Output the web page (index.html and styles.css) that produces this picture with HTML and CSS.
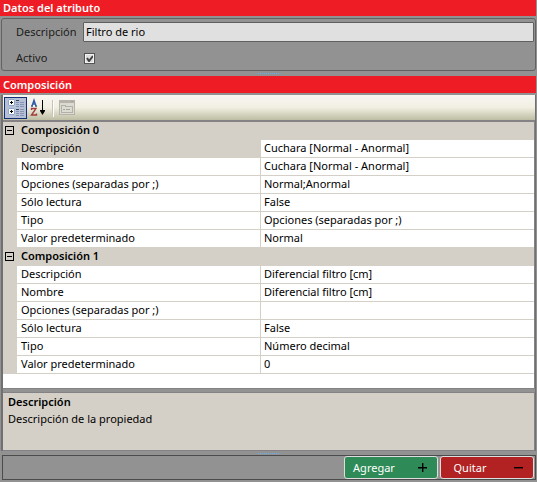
FILE: index.html
```html
<!DOCTYPE html>
<html lang="es">
<head>
<meta charset="utf-8">
<title>Datos del atributo</title>
<link rel="stylesheet" href="styles.css">
</head>
<body>
<main class="window">
  <h2 class="title">Datos del atributo</h2>
  <form class="fields">
    <label for="desc">Descripción</label>
    <input class="text" id="desc" type="text" value="Filtro de rio">
    <label for="active">Activo</label>
    <input class="check" id="active" type="checkbox" checked>
  </form>
  <div class="splitter"><span class="grip"></span></div>
  <h2 class="title title-tall">Composición</h2>
  <section class="inspector">
    <div class="toolbar">
      <button class="tool tool-on" type="button" aria-label="Por categorías">
        <svg width="22" height="22" viewBox="0 0 22 22" shape-rendering="crispEdges">
          <path d="M3 3h7v5H3zM4 2h5v7H4zM3 12h7v5H3zM4 11h5v7H4z" fill="#8fa6cc"/>
          <path d="M4 3h5v5H4zM4 12h5v5H4z" fill="#fff"/>
          <path d="M5 5h3v1H5zM6 4h1v3H6zM5 14h3v1H5zM6 13h1v3H6z" fill="#000"/>
          <path d="M11 3h3v1h-3zM11 12h3v1h-3z" fill="#34445c"/>
          <path d="M11 5h3v1h-3zM11 7h3v1h-3zM11 9h3v1h-3zM11 14h3v1h-3zM11 16h3v1h-3zM11 18h3v1h-3zM15 5h4v1h-4zM15 7h4v1h-4zM15 9h4v1h-4zM15 12h4v1h-4zM15 14h4v1h-4zM15 16h4v1h-4zM15 18h4v1h-4z" fill="#8795b4"/>
        </svg>
      </button>
      <button class="tool" type="button" aria-label="Alfabético">
        <svg width="22" height="22" viewBox="0 0 22 22">
          <path d="M3 9h2M7 9h2M4 9L6 3l2 6M5 7h2" fill="none" stroke="#2f5aa8" stroke-width="1.300"/>
          <path d="M3.500 13v-1.500H8L3.500 18H8.500v-1.500" fill="none" stroke="#a23b3b" stroke-width="1.400"/>
          <path d="M14 3h1v10h2v1l-2.500 4L12 14v-1h2z" fill="#000"/>
        </svg>
      </button>
      <span class="divider"></span>
      <button class="tool" type="button" aria-label="Páginas de propiedades" disabled>
        <svg width="22" height="22" viewBox="0 0 22 22" shape-rendering="crispEdges">
          <path d="M3 3h16v15H3z" fill="#b5b4ab"/>
          <path d="M4 6h14v11H4z" fill="#dcdbd2"/>
          <path d="M5 8h5v1h7v7H5z" fill="#b2b1a8"/>
          <path d="M6 9h3v1h7v5H6z" fill="#dddcd3"/>
          <path d="M7 12h2v1H7zM10 12h4v1h-4zM15 4h2v1h-2z" fill="#a4a39b"/>
        </svg>
      </button>
    </div>
    <div class="sheet">
      <table class="grid">
        <colgroup><col class="c-gutter"><col class="c-name"><col></colgroup>
        <tbody>
          <tr class="group"><td><button class="toggle" type="button" aria-label="Contraer Composición 0"></button></td><th colspan="2">Composición 0</th></tr>
          <tr class="selected"><td></td><th>Descripción</th><td>Cuchara [Normal - Anormal]</td></tr>
          <tr><td></td><th>Nombre</th><td>Cuchara [Normal - Anormal]</td></tr>
          <tr><td></td><th>Opciones (separadas por ;)</th><td>Normal;Anormal</td></tr>
          <tr><td></td><th>Sólo lectura</th><td>False</td></tr>
          <tr><td></td><th>Tipo</th><td>Opciones (separadas por ;)</td></tr>
          <tr><td></td><th>Valor predeterminado</th><td>Normal</td></tr>
        </tbody>
        <tbody>
          <tr class="group"><td><button class="toggle" type="button" aria-label="Contraer Composición 1"></button></td><th colspan="2">Composición 1</th></tr>
          <tr><td></td><th>Descripción</th><td>Diferencial filtro [cm]</td></tr>
          <tr><td></td><th>Nombre</th><td>Diferencial filtro [cm]</td></tr>
          <tr><td></td><th>Opciones (separadas por ;)</th><td></td></tr>
          <tr><td></td><th>Sólo lectura</th><td>False</td></tr>
          <tr><td></td><th>Tipo</th><td>Número decimal</td></tr>
          <tr><td></td><th>Valor predeterminado</th><td>0</td></tr>
        </tbody>
      </table>
    </div>
    <div class="help">
      <h3>Descripción</h3>
      <p>Descripción de la propiedad</p>
    </div>
  </section>
  <div class="splitter splitter-low"><span class="grip"></span></div>
  <footer class="actions">
    <button class="action add" type="button"><span class="caption">Agregar</span>
      <svg width="11" height="11" viewBox="0 0 11 11"><path d="M1 5h9v1.400H1zM5 1h1.400v9H5z"/></svg>
    </button>
    <button class="action remove" type="button"><span class="caption">Quitar</span>
      <svg width="11" height="11" viewBox="0 0 11 11"><path d="M1 5h9v1.400H1z"/></svg>
    </button>
  </footer>
</main>
</body>
</html>
```
FILE: styles.css
```css
* { box-sizing: border-box; }
body {
  margin: 0;
  background: #929292;
  color: #000;
  font: 11px/16px "Noto Sans", "Open Sans", sans-serif;
}
button, input { font: inherit; }
h2, h3, p { margin: 0; font-size: inherit; }

.window { padding-right: 1px; }
.title {
  height: 16px;
  padding-left: 3px;
  background: #ee1c24;
  color: #fff;
  font-weight: 600;
}
.title-tall { height: 17px; line-height: 18px; }

.fields {
  display: grid;
  grid-template-columns: 67px 1fr;
  grid-template-rows: 20px 20px;
  row-gap: 6px;
  align-items: center;
  margin: 2px 0 0 1px;
  padding: 3px 1px 2px 14px;
  border: 1px solid #626262;
  border-radius: 3px;
}
.fields label { color: #1c1c1c; }
.text {
  width: 100%;
  height: 20px;
  padding: 0 2px 2px;
  border: 1px solid #5f5f5f;
  border-radius: 1px;
  background: #e0e0e0;
  color: #000;
}
.check {
  appearance: none;
  width: 11px;
  height: 11px;
  margin: 0 1px;
  border: 1px solid #555;
  background: #ddd url("data:image/svg+xml,%3Csvg xmlns='http://www.w3.org/2000/svg' viewBox='0 0 9 9'%3E%3Cpath d='M2 4l2 3 4-5' fill='none' stroke='%23404040' stroke-width='2'/%3E%3C/svg%3E") center / 9px 9px;
  box-shadow: inset 0 0 0 1px #f2f2f2;
}

.splitter {
  display: flex;
  justify-content: center;
  align-items: center;
  height: 5px;
}
.splitter-low { height: 4px; }
.grip {
  width: 21px;
  height: 1px;
  background: repeating-linear-gradient(90deg, #64b0f0 0 1px, #929292 1px 2px);
}

.inspector {
  margin: 2px 0 0 1px;
  border: solid #707070;
  border-width: 0 1px 0 2px;
}
.toolbar {
  display: flex;
  align-items: center;
  gap: 2px;
  height: 25px;
  padding-left: 1px;
  background: linear-gradient(#f8f7f3, #f2efe2 50%, #bdbda3);
}
.tool {
  display: grid;
  place-items: center;
  width: 23px;
  height: 22px;
  padding: 0;
  border: 0;
  background: none;
}
.tool + .tool { margin-left: -2px; }
.tool-on { background: #b5bfd6; outline: 1px solid #142e74; outline-offset: -1px; }
.divider { width: 1px; height: 16px; background: #c5c3b6; box-shadow: 1px 1px #fff; }

.sheet {
  padding-bottom: 14px;
  border: solid #848284;
  border-width: 2px 1px 1px 0;
  background: #fff;
}
.grid {
  width: 100%;
  border-spacing: 0;
  table-layout: fixed;
}
.c-gutter { width: 14px; }
.c-name { width: 244px; }
.grid td, .grid th {
  height: 18px;
  padding: 0 0 1px 3px;
  border-bottom: 1px solid #d4d0c8;
  font-weight: 400;
  line-height: 16px;
  text-align: left;
}
.grid th { padding-left: 4px; border-right: 1px solid #d4d0c8; }
.grid td:first-child, .grid .group th, .selected th { background: #d4d0c8; }
.grid td:first-child { padding: 0 0 0 2px; }
.grid .group th { font-weight: 600; }
.toggle {
  display: block;
  width: 9px;
  height: 9px;
  padding: 0;
  border: 1px solid #000;
  background: linear-gradient(#000, #000) center / 5px 1px no-repeat;
}

.help {
  min-height: 59px;
  margin-top: 3px;
  padding: 1px 5px;
  border: solid #848284;
  border-width: 1px 1px 1px 0;
  background: #d4d0c8;
}
.help h3 { font-weight: 600; }
.help p { margin-top: 1px; }

.actions {
  display: flex;
  justify-content: flex-end;
  gap: 2px;
  margin-left: 2px;
  padding-right: 1px;
  border: 1px solid #4b4b4b;
}
.action {
  display: flex;
  align-items: center;
  gap: 14px;
  width: 94px;
  height: 23px;
  padding: 0;
  border: 1px solid #dedede;
  border-radius: 3px;
  color: #fff;
}
.caption { width: 58px; text-align: center; }
.add { background: #2e8b57; }
.remove { background: #b22222; }
```
